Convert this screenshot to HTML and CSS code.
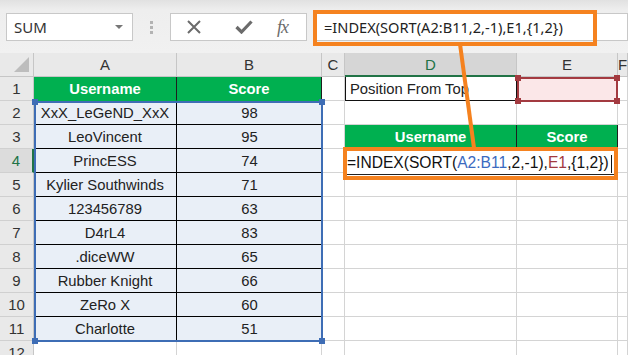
FILE: index.html
```html
<!DOCTYPE html>
<html lang="en">

<head>
    <meta charset="UTF-8">
    <title>INDEX SORT - top scores</title>
    <link rel="stylesheet" href="styles.css">
</head>

<body>
    <div class="app">
        <div class="formula-bar">
            <div class="name-box"><span>SUM</span><span class="caret"></span></div>
            <div class="grip"><i></i><i></i><i></i></div>
            <div class="fn-buttons">
                <svg class="ico" width="14" height="14" viewBox="0 0 14 14">
                    <path d="M1 1 L13 13 M13 1 L1 13" stroke="#6b6b6b" stroke-width="2" fill="none" />
                </svg>
                <svg class="ico" width="18" height="14" viewBox="0 0 18 14">
                    <path d="M1.5 7 L6.5 12 L16.5 1.5" stroke="#6b6b6b" stroke-width="3.2" fill="none" />
                </svg>
                <span class="fx">fx</span>
            </div>
            <div class="formula-input">=INDEX(SORT(A2:B11,2,-1),E1,{1,2})</div>
        </div>

        <div class="sheet">
            <!-- column headers -->
            <div class="corner"><span class="tri"></span></div>
            <div class="col-head">A</div>
            <div class="col-head">B</div>
            <div class="col-head">C</div>
            <div class="col-head active">D</div>
            <div class="col-head">E</div>
            <div class="col-head">F</div>

            <!-- row 1 -->
            <div class="row-head">1</div>
            <div class="cell th">Username</div>
            <div class="cell th">Score</div>
            <div class="cell"></div>
            <div class="cell label">Position From Top</div>
            <div class="cell ref-input"></div>
            <div class="cell"></div>

            <!-- row 2 -->
            <div class="row-head">2</div>
            <div class="cell td name">XxX_LeGeND_XxX</div>
            <div class="cell td">98</div>
            <div class="cell"></div>
            <div class="cell"></div>
            <div class="cell"></div>
            <div class="cell"></div>

            <!-- row 3 -->
            <div class="row-head">3</div>
            <div class="cell td name">LeoVincent</div>
            <div class="cell td">95</div>
            <div class="cell"></div>
            <div class="cell th">Username</div>
            <div class="cell th">Score</div>
            <div class="cell"></div>

            <!-- row 4 -->
            <div class="row-head active">4</div>
            <div class="cell td name">PrincESS</div>
            <div class="cell td">74</div>
            <div class="cell"></div>
            <div class="cell"></div>
            <div class="cell"></div>
            <div class="cell"></div>

            <!-- row 5 -->
            <div class="row-head">5</div>
            <div class="cell td name">Kylier Southwinds</div>
            <div class="cell td">71</div>
            <div class="cell"></div>
            <div class="cell"></div>
            <div class="cell"></div>
            <div class="cell"></div>

            <!-- row 6 -->
            <div class="row-head">6</div>
            <div class="cell td name">123456789</div>
            <div class="cell td">63</div>
            <div class="cell"></div>
            <div class="cell"></div>
            <div class="cell"></div>
            <div class="cell"></div>

            <!-- row 7 -->
            <div class="row-head">7</div>
            <div class="cell td name">D4rL4</div>
            <div class="cell td">83</div>
            <div class="cell"></div>
            <div class="cell"></div>
            <div class="cell"></div>
            <div class="cell"></div>

            <!-- row 8 -->
            <div class="row-head">8</div>
            <div class="cell td name">.diceWW</div>
            <div class="cell td">65</div>
            <div class="cell"></div>
            <div class="cell"></div>
            <div class="cell"></div>
            <div class="cell"></div>

            <!-- row 9 -->
            <div class="row-head">9</div>
            <div class="cell td name">Rubber Knight</div>
            <div class="cell td">66</div>
            <div class="cell"></div>
            <div class="cell"></div>
            <div class="cell"></div>
            <div class="cell"></div>

            <!-- row 10 -->
            <div class="row-head">10</div>
            <div class="cell td name">ZeRo X</div>
            <div class="cell td">60</div>
            <div class="cell"></div>
            <div class="cell"></div>
            <div class="cell"></div>
            <div class="cell"></div>

            <!-- row 11 -->
            <div class="row-head">11</div>
            <div class="cell td name last">Charlotte</div>
            <div class="cell td last">51</div>
            <div class="cell"></div>
            <div class="cell"></div>
            <div class="cell"></div>
            <div class="cell"></div>

            <!-- row 12 -->
            <div class="row-head">12</div>
            <div class="cell"></div>
            <div class="cell"></div>
            <div class="cell"></div>
            <div class="cell"></div>
            <div class="cell"></div>
            <div class="cell"></div>
        </div>

        <!-- range highlights -->
        <div class="range range-blue">
            <i class="h tl"></i><i class="h tr"></i><i class="h bl"></i><i class="h br"></i>
        </div>
        <div class="range range-red">
            <i class="h tl"></i><i class="h tr"></i><i class="h bl"></i><i class="h br"></i>
        </div>

        <!-- in-cell editor -->
        <div class="callout cell-editor">
            <div class="editor-text">=INDEX(SORT(<span class="ref-a">A2:B11</span>,2,-1),<span class="ref-e">E1</span>,{1,2})<span class="cursor"></span></div>
        </div>

        <!-- annotations -->
        <div class="callout bar-callout"></div>
        <svg class="connector" width="628" height="355">
            <line x1="460" y1="44" x2="474" y2="148" stroke="#f5821f" stroke-width="4" />
        </svg>
    </div>
</body>

</html>
```

FILE: styles.css
```css
body {
    margin: 0;
    padding: 0;
    background: #ffffff;
    overflow: hidden;
}

.app {
    position: relative;
    width: 628px;
    height: 355px;
    overflow: hidden;
    font-family: 'Liberation Sans', Arial, sans-serif;
}

/* formula bar */
.formula-bar {
    height: 53px;
    box-sizing: border-box;
    padding-top: 13px;
    display: flex;
    align-items: flex-start;
    background: linear-gradient(#e1e1e1 0, #eeeeee 10px, #f1f1f1 100%);
}

.name-box {
    margin-left: 6px;
    width: 127px;
    height: 28px;
    box-sizing: border-box;
    background: #ffffff;
    border: 1px solid #c8c8c8;
    display: flex;
    align-items: center;
    justify-content: space-between;
    padding: 0 9px 0 7px;
    font-family: 'Noto Sans', sans-serif;
    font-size: 15px;
    color: #333333;
}

.caret {
    width: 0;
    height: 0;
    border-left: 4px solid transparent;
    border-right: 4px solid transparent;
    border-top: 4px solid #777777;
}

.grip {
    width: 37px;
    height: 28px;
    display: flex;
    flex-direction: column;
    align-items: center;
    justify-content: center;
    gap: 2px;
}

.grip i {
    display: block;
    width: 3px;
    height: 3px;
    background: #b3b3b3;
}

.fn-buttons {
    width: 137px;
    height: 28px;
    box-sizing: border-box;
    background: #ffffff;
    border: 1px solid #c8c8c8;
    display: flex;
    align-items: center;
    padding-left: 16px;
}

.fn-buttons .ico:first-child {
    margin-right: 34px;
}

.fn-buttons .ico + .ico {
    margin-right: 24px;
}

.fx {
    font-family: 'Liberation Serif', serif;
    font-style: italic;
    font-size: 18px;
    color: #6b6b6b;
    letter-spacing: -1px;
}

.formula-input {
    margin-left: 6px;
    flex: 1;
    height: 28px;
    box-sizing: border-box;
    background: #ffffff;
    border: 1px solid #c8c8c8;
    padding-left: 10px;
    line-height: 27px;
    font-family: 'Noto Sans', sans-serif;
    font-size: 14.6px;
    color: #222222;
    white-space: nowrap;
}

/* sheet grid */
.sheet {
    display: grid;
    grid-template-columns: 34px 143px 145px 23px 172px 101px 10px;
    grid-auto-rows: 24px;
    font-size: 14.8px;
    color: #222222;
}

.sheet > div {
    box-sizing: border-box;
    display: flex;
    align-items: center;
    justify-content: center;
    white-space: nowrap;
    overflow: hidden;
}

.corner {
    position: relative;
    background: #e9e9e9;
    border-right: 1px solid #c6c6c6;
    border-bottom: 1px solid #c6c6c6;
}

.corner .tri {
    position: absolute;
    right: 4px;
    bottom: 4px;
    width: 0;
    height: 0;
    border-left: 15px solid transparent;
    border-bottom: 15px solid #bdbdbd;
}

.col-head {
    background: #e9e9e9;
    border-right: 1px solid #c6c6c6;
    border-bottom: 1px solid #c6c6c6;
    font-size: 15px;
    color: #333333;
}

.col-head.active {
    background: #d6d6d6;
    color: #217346;
    border-bottom: 2px solid #217346;
}

.row-head {
    background: #e9e9e9;
    border-right: 1px solid #c6c6c6;
    border-bottom: 1px solid #d0d0d0;
    font-size: 15px;
    color: #333333;
}

.row-head.active {
    background: #dcdcdc;
    color: #217346;
    border-right: 2px solid #217346;
}

.cell {
    border-right: 1px solid #d4d4d4;
    border-bottom: 1px solid #d4d4d4;
}

.cell.th {
    background: #00b050;
    color: #ffffff;
    font-weight: bold;
    border-right: 1px solid #1f1f1f;
    border-bottom: 1px solid #00b050;
}

.cell.td {
    background: #e9eff7;
    border-bottom: 1px solid #000000;
    border-right: none;
}

.cell.td.name {
    border-right: 1px solid #000000;
}

.cell.label {
    justify-content: flex-start;
    padding-left: 4px;
    border: 1px solid #111111;
    border-top: none;
}

.cell.ref-input {
    background: #fbe7e8;
}

/* range highlights */
.range {
    position: absolute;
    box-sizing: border-box;
    border: 2px solid;
    pointer-events: none;
}

.range .h {
    position: absolute;
    width: 6px;
    height: 6px;
}

.range .tl { left: -4px; top: -4px; }
.range .tr { right: -4px; top: -4px; }
.range .bl { left: -4px; bottom: -4px; }
.range .br { right: -4px; bottom: -4px; }

.range-blue {
    left: 34px;
    top: 101px;
    width: 289px;
    height: 241px;
    border-color: #3e6db5;
}

.range-blue .h {
    background: #3e6db5;
}

.range-red {
    left: 517px;
    top: 77px;
    width: 101px;
    height: 25px;
    border-color: #a33a40;
}

.range-red .h {
    background: #a33a40;
}

/* orange annotation boxes */
.callout {
    position: absolute;
    box-sizing: border-box;
    border: 4px solid #f5821f;
}

.bar-callout {
    left: 313px;
    top: 10px;
    width: 284px;
    height: 36px;
}

.cell-editor {
    left: 343px;
    top: 147px;
    width: 275px;
    height: 33px;
    background: #ffffff;
}

.editor-text {
    height: 24px;
    box-sizing: border-box;
    border-bottom: 1px solid #222222;
    line-height: 24px;
    font-size: 15.6px;
    color: #111111;
    white-space: nowrap;
}

.ref-a {
    color: #3b6ac0;
}

.ref-e {
    color: #a33a40;
}

.cursor {
    display: inline-block;
    width: 1px;
    height: 18px;
    margin-left: 2px;
    background: #111111;
    vertical-align: middle;
}

.connector {
    position: absolute;
    left: 0;
    top: 0;
    pointer-events: none;
}
```
